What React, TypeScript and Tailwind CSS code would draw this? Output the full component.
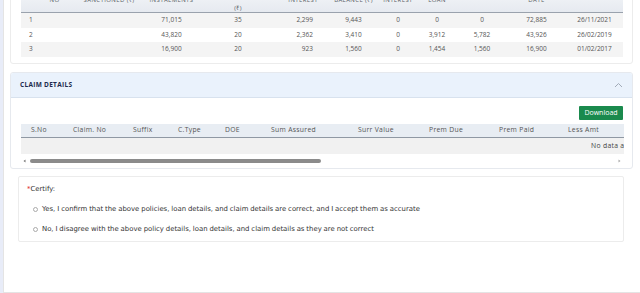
import React from "react";

const F = { fontFamily: '"Open Sans", "Liberation Sans", sans-serif' };
const D = { fontFamily: '"DejaVu Sans", "Open Sans", sans-serif' };

const cols = "grid grid-cols-[59px_58px_67px_66px_58px_49px_40px_38px_52px_57px_59px]";

type Row = string[];
const rows: Row[] = [
  ["1", "", "71,015", "35", "2,299", "9,443", "0", "0", "0", "72,885", "26/11/2021"],
  ["2", "", "43,820", "20", "2,362", "3,410", "0", "3,912", "5,782", "43,926", "26/02/2019"],
  ["3", "", "16,900", "20", "923", "1,560", "0", "1,454", "1,560", "16,900", "01/02/2017"],
];

const headers: [string, string][] = [
  ["NO", ""],
  ["SANCTIONED (₹)", ""],
  ["INSTALMENTS", ""],
  ["", "(₹)"],
  ["INTEREST", ""],
  ["BALANCE (₹)", ""],
  ["INTEREST", ""],
  ["LOAN", ""],
  ["", ""],
  ["DATE", ""],
  ["", ""],
];

function cellAlign(i: number) {
  if (i === 0) return "text-left pl-[8px]";
  if (i === 4) return "text-right pr-[16px]";
  return "text-center";
}

const claimCols: [string, number][] = [
  ["S.No", 42],
  ["Claim. No", 60],
  ["Suffix", 45],
  ["C.Type", 47],
  ["DOE", 46],
  ["Sum Assured", 87],
  ["Surr Value", 71],
  ["Prem Due", 70],
  ["Prem Paid", 69],
  ["Less Amt", 69],
  ["Net Amt", 69],
  ["Status", 69],
  ["Remarks", 69],
  ["Paid Date", 69],
  ["Cheque No", 69],
  ["Bank", 69],
  ["Branch", 69],
  ["Mode", 60],
];

export default function App() {
  return (
    <div style={F} className="w-[640px] h-[293px] overflow-hidden bg-white flex text-[#555]">
      <div className="w-[3px] bg-[#e8ecf8]" />
      <div className="flex-1 h-[293px] border-l border-b border-[#e4e4e4] overflow-hidden">
        <div className="flex flex-col pl-[6px] pr-[7px] h-[292px]">
          {/* top loan table card */}
          <div className="-mt-[13px] border border-[#ececec] rounded-[3px] pl-[10px] pr-[9px] pt-[3px] pb-[6.5px]">
            <div className={`${cols} h-[22px] bg-gradient-to-b from-[#f3f5f8] to-[#e6eaf0] border-b border-[#9aa2ad]`}>
              {headers.map(([a, b], i) => (
                <div key={i} className={`flex flex-col justify-end text-[6px] leading-[8px] tracking-[0.4px] text-[#5a5f66] ${i === 4 ? "text-right pr-[11px]" : "text-center"} ${i === 0 ? "pl-[8px]" : ""}`}>
                  <div className="whitespace-nowrap">{a || "\u00a0"}</div>
                  <div className="whitespace-nowrap">{b || "\u00a0"}</div>
                </div>
              ))}
            </div>
            {rows.map((r, ri) => (
              <div key={ri} className={`${cols} h-[14.5px] items-center text-[6.5px] text-[#555] ${ri % 2 === 0 ? "bg-[#f4f4f4]" : "bg-white"}`}>
                {r.map((c, i) => (
                  <div key={i} className={`whitespace-nowrap ${cellAlign(i)}`}>{c}</div>
                ))}
              </div>
            ))}
          </div>

          {/* claim details card */}
          <div className="mt-[8px] border border-[#e6e9ee] rounded-[3px] overflow-hidden">
            <div className="h-[25px] bg-[#eaf2fc] border-b border-[#d8e2ee] flex items-center justify-between pl-[9px] pr-[9px]">
              <div className="text-[6.5px] font-bold text-[#1d2a4d] tracking-[0.3px]">CLAIM DETAILS</div>
              <svg width="9" height="6" viewBox="0 0 9 6" fill="none">
                <path d="M1 5 L4.5 1.5 L8 5" stroke="#9aa3b0" strokeWidth="0.9" />
              </svg>
            </div>
            <div className="pl-[10px] pr-[9px] pt-[8px]">
              <div className="flex justify-end">
                <div className="h-[14px] w-[44px] bg-[#1a8a4d] text-white text-[7px] flex items-center justify-center rounded-[1px]">
                  Download
                </div>
              </div>
              <div className="mt-[4px] w-[603px] overflow-hidden">
                <div className="w-[1200px]">
                  <div className="flex h-[14px] bg-[#e8edf3] border-b border-[#8f98a3] items-center text-[6.8px] tracking-[0.3px] text-[#555]">
                    {claimCols.map(([t, w], i) => (
                      <div key={i} style={{ width: w }} className="pl-[10px] whitespace-nowrap shrink-0">{t}</div>
                    ))}
                  </div>
                  <div className="h-[16px] bg-[#f1f1f1] flex items-center justify-center text-[6.8px] tracking-[0.3px] text-[#444]">
                    No data available
                  </div>
                </div>
              </div>
              <div className="h-[14px] flex items-center">
                <div className="w-[603px] h-[5px] flex items-center gap-[2px] px-[2px]">
                  <svg width="3" height="4" viewBox="0 0 3 4"><path d="M2.5 0.5 L0.5 2 L2.5 3.5 Z" fill="#777" /></svg>
                  <div className="flex-1 h-[4px] relative">
                    <div className="h-[4px] w-[291px] ml-[2px] rounded-full bg-[#8b8b8b]" />
                  </div>
                  <svg width="3" height="4" viewBox="0 0 3 4"><path d="M0.5 0.5 L2.5 2 L0.5 3.5 Z" fill="#aaa" /></svg>
                </div>
              </div>
            </div>
          </div>

          {/* certify card */}
          <div style={D} className="mt-[7px] ml-[8px] mr-[9px] h-[66px] border border-[#ececec] rounded-[2px] pl-[8px] pt-[7px] text-[6.9px] [word-spacing:-0.3px] text-[#333]">
            <div className="h-[10px] flex items-center">
              <span className="text-[#d11]">*</span>
              <span>Certify:</span>
            </div>
            <div className="mt-[10px] h-[10px] flex items-center pl-[6px] gap-[4px]">
              <span className="w-[5px] h-[5px] rounded-full border-[0.6px] border-[#aaa] bg-white shrink-0" />
              <span className="whitespace-nowrap">Yes, I confirm that the above policies, loan details, and claim details are correct, and I accept them as accurate</span>
            </div>
            <div className="mt-[10px] h-[10px] flex items-center pl-[6px] gap-[4px]">
              <span className="w-[5px] h-[5px] rounded-full border-[0.6px] border-[#aaa] bg-white shrink-0" />
              <span className="whitespace-nowrap">No, I disagree with the above policy details, loan details, and claim details as they are not correct</span>
            </div>
          </div>
        </div>
      </div>
    </div>
  );
}
